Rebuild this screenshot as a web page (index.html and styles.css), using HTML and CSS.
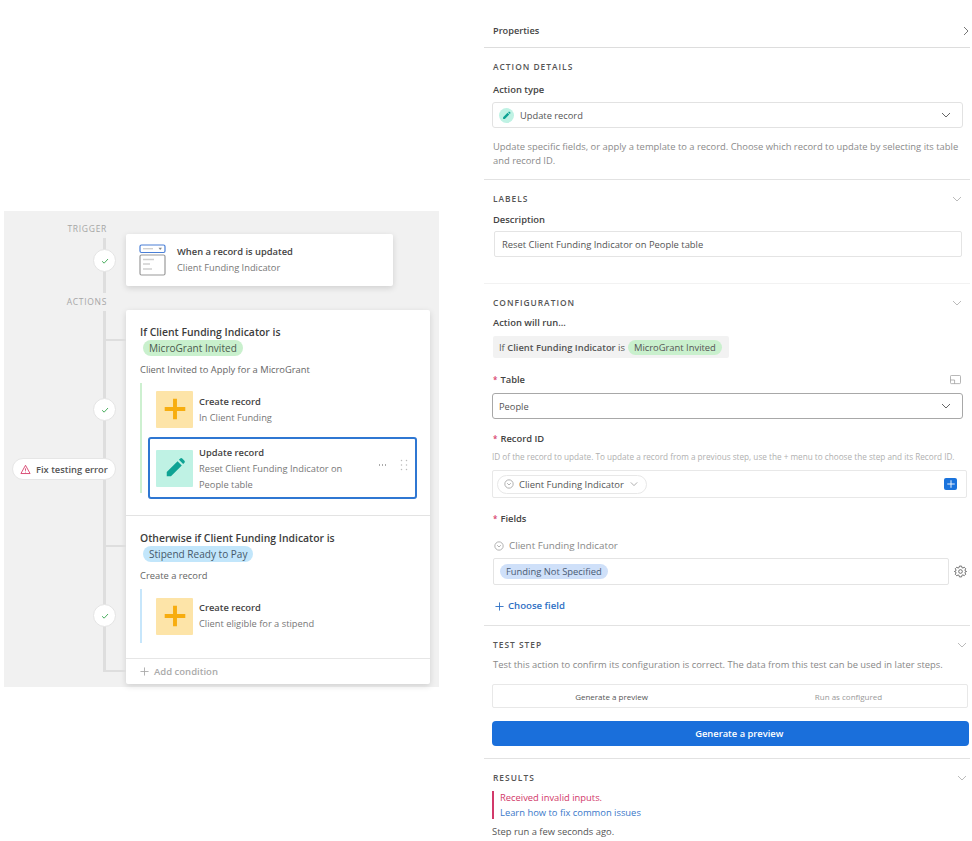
FILE: index.html
```html
<!DOCTYPE html>
<html lang="en">
<head>
<meta charset="utf-8">
<title>Update record</title>
<link rel="stylesheet" href="styles.css">
</head>
<body>
<div class="page">
  <main class="canvas">
    <div class="rail-label rail-trigger">TRIGGER</div>
    <div class="rail-label rail-actions">ACTIONS</div>
    <div class="line line-a"></div>
    <div class="line line-b"></div>
    <div class="branch branch-1"></div>
    <div class="branch branch-2"></div>
    <div class="branch branch-3"></div>
    <div class="check check-1"><svg viewBox="0 0 12 12"><path d="M2.5 6.3 5 8.6 9.6 3.6"/></svg></div>
    <div class="check check-2"><svg viewBox="0 0 12 12"><path d="M2.5 6.3 5 8.6 9.6 3.6"/></svg></div>
    <div class="check check-3"><svg viewBox="0 0 12 12"><path d="M2.5 6.3 5 8.6 9.6 3.6"/></svg></div>
    <div class="fix-pill">
      <svg class="warn" viewBox="0 0 12 12"><path d="M6 1.4 11 10.4H1Z"/><path d="M6 4.8V7.4M6 8.4V9.2"/></svg>
      <span>Fix testing error</span>
    </div>

    <section class="card trigger-card">
      <svg class="trigger-icon" viewBox="0 0 28 32">
        <rect x="1" y="1" width="25" height="7.5" rx="1.5" class="ti-blue"/>
        <path d="M4 4.7H14" class="ti-line"/>
        <path d="M19.5 3.8H23L21.2 6Z" class="ti-arrow"/>
        <rect x="1" y="11" width="25" height="20" rx="1.5" class="ti-box"/>
        <path d="M4 15.5H15M4 20H11M4 25H13" class="ti-line"/>
      </svg>
      <div class="step-text">
        <div class="step-title">When a record is updated</div>
        <div class="step-sub">Client Funding Indicator</div>
      </div>
    </section>

    <section class="card actions-card">
      <div class="branch-block first">
        <div class="cond-title">If Client Funding Indicator is</div>
        <span class="tag tag-green">MicroGrant Invited</span>
        <div class="cond-desc">Client Invited to Apply for a MicroGrant</div>
        <div class="steps steps-green">
          <div class="step">
            <div class="step-icon yellow"><svg viewBox="0 0 24 24"><path d="M12 2.5V21.5M2.5 12H21.5"/></svg></div>
            <div class="step-text">
              <div class="step-title">Create record</div>
              <div class="step-sub">In Client Funding</div>
            </div>
          </div>
          <div class="step selected">
            <div class="step-icon teal"><svg viewBox="0 0 24 24"><path d="M3 21v-4.600L14.800 4.600l4.600 4.600L7.600 21ZM16.300 3.100l1.400-1.400a1.600 1.600 0 0 1 2.200 0l2.400 2.400a1.600 1.600 0 0 1 0 2.200l-1.400 1.400Z"/></svg></div>
            <div class="step-text">
              <div class="step-title">Update record</div>
              <div class="step-sub">Reset Client Funding Indicator on<br>People table</div>
            </div>
            <div class="step-tools">
              <span class="dots"></span>
              <svg class="grip" viewBox="0 0 8 12"><path d="M1.500 1.500h.01M6.500 1.500h.01M1.500 6h.01M6.500 6h.01M1.500 10.500h.01M6.500 10.500h.01"/></svg>
            </div>
          </div>
        </div>
      </div>
      <div class="branch-block second">
        <div class="cond-title">Otherwise if Client Funding Indicator is</div>
        <span class="tag tag-blue">Stipend Ready to Pay</span>
        <div class="cond-desc">Create a record</div>
        <div class="steps steps-blue">
          <div class="step">
            <div class="step-icon yellow"><svg viewBox="0 0 24 24"><path d="M12 2.500V21.500M2.500 12H21.500"/></svg></div>
            <div class="step-text">
              <div class="step-title">Create record</div>
              <div class="step-sub">Client eligible for a stipend</div>
            </div>
          </div>
        </div>
      </div>
      <div class="add-cond"><svg viewBox="0 0 10 10"><path d="M5 .5V9.500M.5 5H9.500"/></svg><span>Add condition</span></div>
    </section>
  </main>

  <aside class="panel">
    <header class="props">
      <span>Properties</span>
      <svg class="chev-right" viewBox="0 0 6 10"><path d="M1 1 5 5 1 9"/></svg>
    </header>

    <section class="sec sec-details">
      <h2 class="sec-head">ACTION DETAILS</h2>
      <div class="label label-type">Action type</div>
      <div class="select">
        <span class="round-icon"><svg viewBox="0 0 24 24"><path d="M3 21v-4.600L14.800 4.600l4.600 4.600L7.600 21ZM16.300 3.100l1.400-1.400a1.600 1.600 0 0 1 2.200 0l2.400 2.400a1.600 1.600 0 0 1 0 2.200l-1.400 1.400Z"/></svg></span>
        <span class="select-text">Update record</span>
        <svg class="chev dark" viewBox="0 0 10 6"><path d="M1 1 5 5 9 1"/></svg>
      </div>
      <p class="hint">Update specific fields, or apply a template to a record. Choose which record to update by selecting its table and record ID.</p>
    </section>

    <section class="sec sec-labels">
      <div class="head-row narrow">
        <h2 class="sec-head">LABELS</h2>
        <svg class="chev" viewBox="0 0 10 6"><path d="M1 1 5 5 9 1"/></svg>
      </div>
      <div class="label label-desc">Description</div>
      <div class="input desc-input">Reset Client Funding Indicator on People table</div>
    </section>

    <section class="sec sec-config">
      <div class="head-row narrow">
        <h2 class="sec-head">CONFIGURATION</h2>
        <svg class="chev" viewBox="0 0 10 6"><path d="M1 1 5 5 9 1"/></svg>
      </div>
      <div class="label label-run">Action will run...</div>
      <div class="run-box"><span class="run-if">If <b>Client Funding Indicator</b> is</span><span class="tag-small tag-green">MicroGrant Invited</span></div>

      <div class="field-row">
        <div class="label"><i>*</i>Table</div>
        <svg class="expand" viewBox="0 0 12 11"><rect x=".5" y=".5" width="11" height="9" rx="1"/><path d="M.5 5.500H5V9.500"/></svg>
      </div>
      <div class="select strong"><span class="select-text">People</span><svg class="chev dark" viewBox="0 0 10 6"><path d="M1 1 5 5 9 1"/></svg></div>

      <div class="label label-record"><i>*</i>Record ID</div>
      <p class="micro">ID of the record to update. To update a record from a previous step, use the + menu to choose the step and its Record ID.</p>
      <div class="record-box">
        <span class="record-pill">
          <svg class="circle-chev" viewBox="0 0 12 12"><circle cx="6" cy="6" r="5"/><path d="M3.800 5 6 7.200 8.200 5"/></svg>
          <span>Client Funding Indicator</span>
          <svg class="chev" viewBox="0 0 10 6"><path d="M1 1 5 5 9 1"/></svg>
        </span>
        <span class="plus-btn"><svg viewBox="0 0 12 12"><path d="M6 1.500V10.500M1.500 6H10.500"/></svg></span>
      </div>

      <div class="label label-fields"><i>*</i>Fields</div>
      <div class="field-name">
        <svg class="circle-chev" viewBox="0 0 12 12"><circle cx="6" cy="6" r="5"/><path d="M3.800 5 6 7.200 8.200 5"/></svg>
        <span>Client Funding Indicator</span>
      </div>
      <div class="value-row">
        <div class="input value-input"><span class="tag-small tag-lav">Funding Not Specified</span></div>
        <svg class="gear" viewBox="0 0 24 24"><path d="M10 2h4l.6 2.800 1.900.8 2.400-1.500 2.800 2.800-1.500 2.400.8 1.900L23.200 12l-2.200.6-.8 1.900 1.500 2.400-2.800 2.800-2.400-1.500-1.900.8L14 22h-4l-.6-2.800-1.900-.8-2.400 1.500-2.800-2.800 1.500-2.400-.8-1.900L.8 12 3 11.200l.8-1.900-1.500-2.400 2.800-2.800 2.400 1.500 1.900-.8Z"/><circle cx="12" cy="12" r="3.400"/></svg>
      </div>
      <div class="choose"><svg viewBox="0 0 10 10"><path d="M5 .5V9.500M.5 5H9.500"/></svg><span>Choose field</span></div>
    </section>

    <section class="sec sec-test">
      <div class="head-row">
        <h2 class="sec-head">TEST STEP</h2>
        <svg class="chev" viewBox="0 0 10 6"><path d="M1 1 5 5 9 1"/></svg>
      </div>
      <p class="hint test-hint">Test this action to confirm its configuration is correct. The data from this test can be used in later steps.</p>
      <div class="tabs"><span class="tab on">Generate a preview</span><span class="tab">Run as configured</span></div>
      <button class="primary" type="button">Generate a preview</button>
    </section>

    <section class="sec sec-results">
      <div class="head-row">
        <h2 class="sec-head">RESULTS</h2>
        <svg class="chev" viewBox="0 0 10 6"><path d="M1 1 5 5 9 1"/></svg>
      </div>
      <div class="error">
        <div class="err-text">Received invalid inputs.</div>
        <div class="err-link">Learn how to fix common issues</div>
      </div>
      <div class="ran">Step run a few seconds ago.</div>
    </section>
  </aside>
</div>
</body>
</html>
```

FILE: styles.css
```css
* { box-sizing: border-box; }
html, body { margin: 0; padding: 0; background: #fff; }
body { font-family: "Open Sans", "Noto Sans", sans-serif; color: #333; width: 972px; height: 841px; overflow: hidden; }
.page { display: flex; align-items: flex-start; height: 841px; padding-left: 4px; }

/* canvas */
.canvas { position: relative; width: 435px; height: 476px; margin-top: 211px; padding: 23px 9px 0 122px; background: #f1f1f1; flex: none; }
.rail-label { position: absolute; right: 332px; font-size: 8.500px; letter-spacing: .7px; color: #a6a6a6; line-height: 12px; }
.rail-trigger { top: 12px; }
.rail-actions { top: 85px; }
.line { position: absolute; left: 99px; width: 2.500px; background: #dedede; }
.line-a { top: 27px; height: 55px; }
.line-b { top: 100px; height: 361px; }
.branch { position: absolute; left: 100px; width: 22px; height: 2px; background: #dedede; }
.branch-1 { top: 128px; }
.branch-2 { top: 334px; }
.branch-3 { top: 459px; }
.check { position: absolute; left: 89px; width: 23px; height: 23px; border-radius: 50%; background: #fff; border: 1px solid #e4e4e4; display: flex; align-items: center; justify-content: center; }
.check svg { width: 10px; height: 10px; fill: none; stroke: #4caf60; stroke-width: 1.200; }
.check-1 { top: 38px; }
.check-2 { top: 187px; }
.check-3 { top: 393px; }
.fix-pill { position: absolute; left: 8px; top: 247px; width: 104px; height: 22px; border-radius: 11px; background: #fff; border: 1px solid #e6e6e6; display: flex; align-items: center; gap: 5px; padding-left: 7px; font-size: 9.350px; font-weight: 600; color: #555; }
.warn { width: 11px; height: 11px; fill: none; stroke: #d8416c; stroke-width: 1; }
.card { background: #fff; border-radius: 2px; box-shadow: 0 2px 6px rgba(0,0,0,.14); }
.trigger-card { width: 267px; height: 52px; display: flex; align-items: center; padding-left: 13px; gap: 10px; margin-bottom: 24px; }
.trigger-icon { width: 28px; height: 32px; flex: none; fill: none; }
.ti-blue { stroke: #4a7fd6; stroke-width: 1.200; fill: #fff; }
.ti-box { stroke: #9a9a9a; stroke-width: 1.200; fill: #fff; }
.ti-line { stroke: #cfcfcf; stroke-width: 1.300; }
.ti-arrow { fill: #888; }
.step-text { min-width: 0; }
.steps-green .step-text { padding-top: 2px; }
.step-title { font-size: 9.350px; font-weight: 600; color: #444; line-height: 16px; }
.step-sub { font-size: 9.300px; color: #777; line-height: 16px; }
.actions-card { height: 374px; display: flex; flex-direction: column; }
.branch-block { padding: 14px 13px 0 14px; }
.branch-block.first { height: 206px; border-bottom: 1px solid #e3e3e3; }
.branch-block.second { height: 143px; padding-top: 14px; border-bottom: 1px solid #e6e6e6; }
.cond-title { font-size: 10.400px; font-weight: 600; color: #3c3c3c; line-height: 16px; }
.tag { display: block; width: max-content; margin: 0 0 0 3px; padding: 0 6px; font-size: 10.050px; line-height: 16px; border-radius: 8px; color: #4b5a4e; }
.tag-green { background: #c9f0cd; }
.tag-blue { background: #c2e6fb; color: #46596a; }
.cond-desc { font-size: 9.350px; color: #666; line-height: 14px; margin-top: 7px; }
.steps { border-left: 2.500px solid; padding-left: 6px; }
.steps-green { border-color: #cdf0d0; height: 110px; margin-top: 6px; }
.steps-blue { border-color: #c7e6fb; height: 54px; margin-top: 6px; }
.step { display: flex; align-items: center; gap: 6px; padding-left: 8px; height: 52px; }
.steps-blue .step { height: 54px; }
.step.selected { margin-top: 2px; height: 62px; border: 2px solid #2f77d2; border-radius: 3px; padding-left: 6px; position: relative; }
.step-icon { width: 37px; height: 37px; border-radius: 1px; flex: none; display: flex; align-items: center; justify-content: center; }
.step-icon svg { width: 26px; height: 26px; }
.yellow { background: #fde4a8; }
.yellow svg { fill: none; stroke: #f7ad0f; stroke-width: 3.600; }
.teal { background: #bff2e4; }
.teal svg { fill: #0fa394; width: 22px; height: 22px; }
.step-tools { position: absolute; right: 7px; top: 20px; display: flex; align-items: center; gap: 13px; }
.dots { display: block; width: 9px; height: 2px; background-image: radial-gradient(circle, #aaa 1px, transparent 1px); background-size: 3px 2px; }
.grip { width: 8px; height: 12px; fill: none; stroke: #bbb; stroke-width: 1.500; stroke-linecap: round; }
.add-cond { flex: 1; display: flex; align-items: center; gap: 5px; padding: 0 0 0 14px; font-size: 9.500px; color: #aaa; font-weight: 600; }
.add-cond svg { width: 9px; height: 9px; fill: none; stroke: #aaa; stroke-width: 1; }

/* panel */
.panel { width: 486px; margin-left: 45px; flex: none; font-size: 9.400px; }
.props { height: 48px; padding: 24px 1px 0 9px; display: flex; justify-content: space-between; align-items: flex-start; font-size: 9.200px; font-weight: 600; color: #444; line-height: 14px; border-bottom: 1px solid #ddd; }
.chev-right { width: 6px; height: 10px; fill: none; stroke: #777; stroke-width: 1; margin-top: 2px; }
.sec { padding: 0 0 0 8px; border-bottom: 1px solid #e2e2e2; }
.sec-head { margin: 0; padding-left: 1px; font-size: 8.400px; font-weight: 600; letter-spacing: 1px; color: #555; line-height: 12px; }
.head-row { display: flex; justify-content: space-between; align-items: center; padding-right: 3px; }
.head-row.narrow { padding-right: 8px; }
.chev { width: 10px; height: 6px; fill: none; stroke: #bbb; stroke-width: 1; flex: none; }
.chev.dark { stroke: #666; }
.label { padding-left: 1px; font-size: 9.400px; font-weight: 600; color: #444; line-height: 14px; }
.label i { font-style: normal; color: #d8416c; margin-right: 3px; font-size: 8px; }
.sec-details { height: 132px; padding-top: 13px; }
.label-type { margin-top: 10px; }
.select { display: flex; align-items: center; width: 471px; height: 26px; border: 1px solid #e2e2e2; border-radius: 3px; padding: 0 11px 0 6px; margin-top: 5px; }
.select .chev { margin-left: auto; }
.select-text { font-size: 9.300px; color: #555; }
.round-icon { width: 15px; height: 15px; border-radius: 50%; background: #bff2e4; display: flex; align-items: center; justify-content: center; margin-right: 6px; }
.round-icon svg { width: 9px; height: 9px; fill: #0fa394; }
.hint { margin: 0; padding-left: 1px; font-size: 9.400px; color: #8b8b8b; line-height: 13.500px; }
.sec-details .hint { margin-top: 12px; width: 474px; }
.sec-labels { height: 104px; padding-top: 13px; border-bottom-color: #f2f2f2; }
.label-desc { margin-top: 8px; }
.input { border: 1px solid #e4e4e4; border-radius: 2px; font-size: 9.400px; color: #555; display: flex; align-items: center; }
.desc-input { width: 468px; height: 26px; margin: 4px 0 0 2px; padding-left: 7px; }
.sec-config { height: 342px; padding-top: 13px; }
.label-run { margin-top: 7px; }
.run-box { display: flex; align-items: center; width: 236px; height: 22px; margin: 6px 0 0 1px; padding-left: 6px; background: #f2f2f2; border-radius: 2px; font-size: 9.400px; color: #555; white-space: nowrap; }
.run-box b { font-weight: 600; }
.run-if { margin-right: 3px; }
.tag-small { padding: 0 6px; font-size: 9.400px; line-height: 15px; border-radius: 7.500px; white-space: nowrap; }
.field-row { display: flex; justify-content: space-between; align-items: center; width: 471px; margin-top: 15px; }
.expand { width: 11px; height: 10px; fill: none; stroke: #999; stroke-width: .8; margin-right: 2px; }
.select.strong { height: 26px; margin-top: 6px; border: 1.500px solid #a8a8a8; padding-left: 6px; }
.label-record { margin-top: 13px; }
.micro { margin: 5px 0 0; font-size: 8.200px; color: #b0b0b0; line-height: 12px; white-space: nowrap; }
.record-box { display: flex; align-items: center; justify-content: space-between; width: 475px; height: 28px; margin-top: 7px; border: 1px solid #e8e8e8; border-radius: 2px; padding: 0 9px 0 4px; }
.record-pill { display: flex; align-items: center; height: 19px; padding: 0 8px 0 6px; border: 1px solid #e8e8e8; border-radius: 10px; font-size: 9.450px; color: #555; }
.record-pill .circle-chev { margin-right: 5px; }
.record-pill .chev { margin-left: 6px; width: 8px; stroke: #999; }
.circle-chev { width: 10px; height: 10px; fill: none; stroke: #999; stroke-width: .9; margin-right: 7px; }
.plus-btn { width: 13px; height: 12.500px; background: #1a73dc; border-radius: 2px; display: flex; align-items: center; justify-content: center; }
.plus-btn svg { width: 10px; height: 10px; fill: none; stroke: #fff; stroke-width: 1.100; }
.label-fields { margin-top: 14px; }
.field-name { display: flex; align-items: center; margin-top: 13px; font-size: 9.800px; color: #888; line-height: 14px; padding-left: 2px; }
.field-name .circle-chev { margin-right: 5px; }
.value-row { display: flex; align-items: center; gap: 7px; margin-top: 5px; }
.value-input { width: 456px; height: 27px; padding-left: 6px; margin-left: 1px; }
.tag-lav { background: #cfe0f9; color: #4a5b74; }
.gear { width: 13px; height: 13px; margin-left: -2px; fill: none; stroke: #666; stroke-width: 1.700; }
.choose { display: flex; align-items: center; gap: 4px; margin-top: 14px; font-size: 9.600px; font-weight: 600; color: #2d6fc4; line-height: 14px; }
.choose svg { width: 9px; height: 9px; fill: none; stroke: #2d6fc4; stroke-width: 1; margin-left: 3px; }
.sec-test { height: 133px; padding-top: 13px; }
.test-hint { margin-top: 7px; white-space: nowrap; color: #888; }
.tabs { display: flex; width: 476px; height: 24px; margin-top: 12px; border: 1px solid #e8e8e8; border-radius: 2px; }
.tab { flex: 1; display: flex; align-items: center; justify-content: center; font-size: 8px; color: #999; padding-top: 2px; }
.tab.on { color: #555; }
.primary { display: block; width: 476.500px; height: 25px; margin-top: 13px; background: #1a6fdb; color: #fff; border: 0; border-radius: 4px; font: 600 9.350px "Open Sans", sans-serif; padding: 0 0 0 18px; }
.sec-results { border-bottom: 0; padding-top: 13px; }
.error { margin-top: 7px; border-left: 2px solid #d2396a; padding-left: 6px; height: 28px; line-height: 14.500px; }
.err-text { color: #d2396a; font-size: 9.400px; }
.err-link { color: #3a78c9; font-size: 9.400px; }
.ran { margin-top: 6px; font-size: 9.400px; color: #555; line-height: 14px; }
```
